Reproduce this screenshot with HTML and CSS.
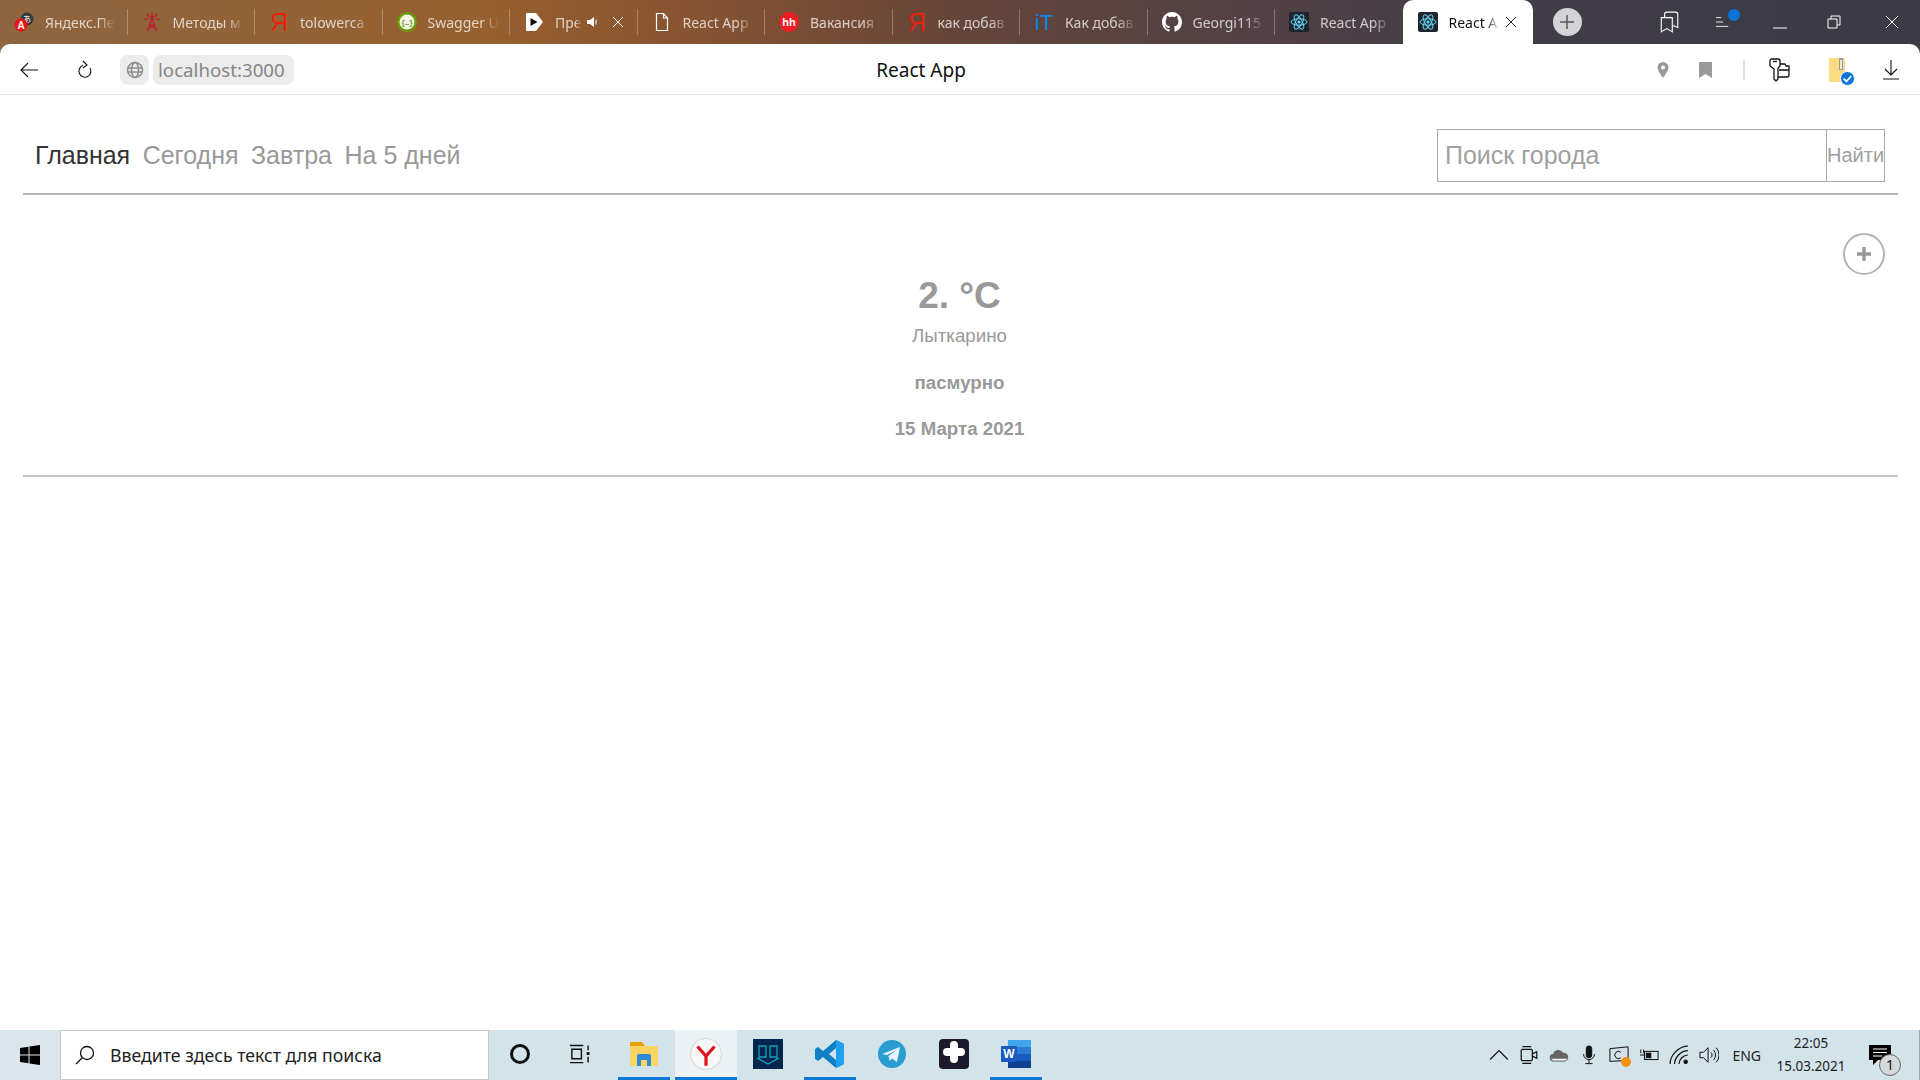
FILE: index.html
```html
<!DOCTYPE html>
<html lang="ru">
<head>
  <meta charset="UTF-8">
  <title>React App</title>
  <link rel="stylesheet" href="styles.css">
</head>
<body>

  <svg class="sprite" aria-hidden="true">
    <symbol id="ico-react" viewBox="0 0 20 20">
      <rect width="20" height="20" rx="2" fill="#20232a"/>
      <g fill="none" stroke="#61dafb" stroke-width="1">
        <ellipse cx="10" cy="10" rx="8" ry="3.2"/>
        <ellipse cx="10" cy="10" rx="8" ry="3.2" transform="rotate(60 10 10)"/>
        <ellipse cx="10" cy="10" rx="8" ry="3.2" transform="rotate(120 10 10)"/>
      </g>
      <circle cx="10" cy="10" r="1.6" fill="#61dafb"/>
    </symbol>
  </svg>

  <header class="browser">
    <div class="tabs">
      <div class="tab">
        <svg class="tab-ico" viewBox="0 0 20 20">
          <circle cx="13" cy="7" r="6.5" fill="#3a3a3a"/>
          <text x="13" y="10" text-anchor="middle" font-family="Noto Sans CJK JP" font-size="8" fill="#fff">あ</text>
          <circle cx="7" cy="13" r="6.5" fill="#f01018"/>
          <text x="7" y="17" text-anchor="middle" font-family="Liberation Sans" font-weight="700" font-size="10" fill="#fff">A</text>
        </svg>
        <span class="tab-title">Яндекс.Пе</span>
      </div>
      <div class="tab">
        <svg class="tab-ico" viewBox="0 0 20 20" fill="none" stroke="#b8242a" stroke-width="1.5">
          <path d="M10 6 5.5 19M10 6l4.500 13M7.500 13h5M6.500 16l7-3M13.500 16l-7-3"/>
          <path d="M10 1v2M4.500 2 7 5M15.500 2 13 5M2.500 7l3 .5M17.500 7l-3 .5"/>
          <circle cx="10" cy="5.500" r="1.500" fill="#b8242a"/>
        </svg>
        <span class="tab-title">Методы м</span>
      </div>
      <div class="tab">
        <svg class="tab-ico" viewBox="0 0 20 20"><text x="10" y="19" text-anchor="middle" font-family="Liberation Sans" font-size="25" fill="#e8220f">Я</text></svg>
        <span class="tab-title">tolowerca</span>
      </div>
      <div class="tab">
        <svg class="tab-ico" viewBox="0 0 20 20">
          <circle cx="10" cy="10" r="10" fill="#6b9a0a"/>
          <circle cx="10" cy="10" r="7.500" fill="#f1f4e2"/>
          <text x="10" y="12.500" text-anchor="middle" font-family="Liberation Mono" font-weight="700" font-size="6.500" fill="#5b8a08">{…}</text>
        </svg>
        <span class="tab-title">Swagger U</span>
      </div>
      <div class="tab">
        <svg class="tab-ico" viewBox="0 0 20 20">
          <path d="M3 1h9l7 9-7 9H3a1 1 0 0 1-1-1V2a1 1 0 0 1 1-1z" fill="#fff"/>
          <path d="M6.500 6v8l7-4z" fill="#111"/>
        </svg>
        <span class="tab-title tab-title-short">Пре</span>
        <svg class="tab-sound" viewBox="0 0 12 12"><path d="M1 4h3l4-3v10L4 8H1z" fill="#fff"/><path d="M10 3.500v5" stroke="#fff"/></svg>
        <svg class="tab-x tab-x-light" viewBox="0 0 12 12"><path d="M1 1l10 10M11 1 1 11"/></svg>
      </div>
      <div class="tab">
        <svg class="tab-ico" viewBox="0 0 20 20" fill="none" stroke="#fff" stroke-width="1.200"><path d="M4.500 1.500h7l4 4.500v12.500h-11z"/><path d="M11.500 1.500V6h4"/></svg>
        <span class="tab-title">React App</span>
      </div>
      <div class="tab">
        <svg class="tab-ico" viewBox="0 0 20 20">
          <circle cx="10" cy="10" r="10" fill="#ee1d24"/>
          <text x="10" y="14" text-anchor="middle" font-family="Liberation Sans" font-weight="700" font-size="11" fill="#fff">hh</text>
        </svg>
        <span class="tab-title">Вакансия</span>
      </div>
      <div class="tab">
        <svg class="tab-ico" viewBox="0 0 20 20"><text x="10" y="19" text-anchor="middle" font-family="Liberation Sans" font-size="25" fill="#e8220f">Я</text></svg>
        <span class="tab-title">как добав</span>
      </div>
      <div class="tab">
        <svg class="tab-ico" viewBox="0 0 20 20">
          <text x="10" y="18" text-anchor="middle" font-family="Liberation Sans" font-size="22" fill="#0a84e8">iT</text>
        </svg>
        <span class="tab-title">Как добав</span>
      </div>
      <div class="tab">
        <svg class="tab-ico" viewBox="0 0 16 16">
          <path fill="#fff" d="M8 0C3.580 0 0 3.580 0 8c0 3.540 2.290 6.530 5.470 7.590.4.070.55-.17.55-.38 0-.19-.01-.82-.01-1.490-2.010.37-2.530-.49-2.690-.94-.09-.23-.48-.94-.82-1.130-.28-.15-.68-.52-.01-.53.63-.01 1.080.58 1.230.82.72 1.210 1.870.87 2.330.66.070-.52.28-.87.51-1.070-1.780-.2-3.640-.89-3.640-3.950 0-.87.31-1.590.82-2.150-.08-.2-.36-1.020.08-2.120 0 0 .67-.21 2.200.82.64-.18 1.320-.27 2-.27.68 0 1.360.09 2 .27 1.530-1.040 2.200-.82 2.200-.82.44 1.100.16 1.920.08 2.120.51.56.82 1.270.82 2.150 0 3.070-1.870 3.750-3.650 3.950.29.25.54.73.54 1.480 0 1.070-.01 1.930-.01 2.200 0 .21.15.46.55.38A8.013 8.013 0 0 0 16 8c0-4.420-3.580-8-8-8z"/>
        </svg>
        <span class="tab-title">Georgi115</span>
      </div>
      <div class="tab tab-last">
        <svg class="tab-ico"><use href="#ico-react"/></svg>
        <span class="tab-title">React App</span>
      </div>
      <div class="tab tab-active">
        <svg class="tab-ico"><use href="#ico-react"/></svg>
        <span class="tab-title tab-title-active">React A</span>
        <svg class="tab-x" viewBox="0 0 12 12"><path d="M1 1l10 10M11 1 1 11"/></svg>
      </div>
      <div class="new-tab">
        <svg viewBox="0 0 14 14"><path d="M7 0v14M0 7h14"/></svg>
      </div>

      <div class="win-btns">
        <svg class="win-ico win-collect" viewBox="0 0 18 20"><path d="M2 6h10v13l-5-3-5 3zM5 6V3a2 2 0 0 1 2-2h8a2 2 0 0 1 2 2v12l-5-2"/></svg>
        <div class="win-menu">
          <svg class="win-ico" viewBox="0 0 16 14"><path d="M0 2h6M0 7h8M0 12h14"/></svg>
          <span class="win-dot"></span>
        </div>
        <svg class="win-ico win-min" viewBox="0 0 14 14"><path d="M0 13h14"/></svg>
        <svg class="win-ico win-restore" viewBox="0 0 14 14"><path d="M1 4h9v9H1zM4 4V1h9v9h-3"/></svg>
        <svg class="win-ico win-close" viewBox="0 0 14 14"><path d="M1 1l12 12M13 1 1 13"/></svg>
      </div>
    </div>

    <div class="toolbar">
      <svg class="tool-ico tool-back" viewBox="0 0 18 16"><path d="M18 8H1M8 1 1 8l7 7"/></svg>
      <svg class="tool-ico tool-reload" viewBox="0 0 16 20"><path d="M13 8a6 6 0 1 1-7-2.500M6 1l4 4-4 3"/></svg>
      <div class="globe-pill">
        <svg viewBox="0 0 18 18" fill="none" stroke="#8c8c8c" stroke-width="1.500"><circle cx="9" cy="9" r="7.500"/><ellipse cx="9" cy="9" rx="3.500" ry="7.500"/><path d="M2 7h14M2 11h14"/></svg>
      </div>
      <div class="url-pill">localhost:3000</div>
      <div class="page-title">React App</div>
      <div class="tool-right">
        <svg class="tr-pin" viewBox="0 0 12 16"><path fill="#999" fill-rule="evenodd" d="M6 0a5.500 5.500 0 0 1 5.500 5.500C11.500 9 6 16 6 16S.5 9 .5 5.500A5.500 5.500 0 0 1 6 0zm0 3.500a2 2 0 1 0 0 4 2 2 0 0 0 0-4z"/></svg>
        <svg class="tr-mark" viewBox="0 0 13 16"><path fill="#999" d="M0 0h13v16L6.500 12 0 16z"/></svg>
        <span class="tr-sep"></span>
        <svg class="tr-keys" viewBox="0 0 22 24" fill="none" stroke="#111" stroke-width="1.300"><path d="M3 1h7a2 2 0 0 1 2 2v5l-2 2v11l-2 2-2-2V11L2 8V3a2 2 0 0 1 1-2z"/><path d="M5 3.500h4"/><path d="M12 6h5l1 2h3v9a2 2 0 0 1-2 2h-9M11 12h10"/></svg>
        <div class="tr-zip">
          <svg viewBox="0 0 16 24"><rect width="16" height="24" fill="#f9dc82"/><rect x="10" width="4" height="12" fill="#9a9a9a"/><rect x="11" y="2" width="2" height="9" fill="#e8e8e8"/></svg>
          <span class="zip-badge">
            <svg viewBox="0 0 12 12"><path d="M2.500 6.200 5 8.700l4.500-5"/></svg>
          </span>
        </div>
        <svg class="tool-ico tr-down" viewBox="0 0 16 20"><path d="M8 0v15M2 9l6 6 6-6M0 19h16"/></svg>
      </div>
    </div>
  </header>

  <main class="page">
    <div class="top-nav">
      <nav class="nav-links">
        <a class="nav-link nav-link-active">Главная</a>
        <a class="nav-link">Сегодня</a>
        <a class="nav-link">Завтра</a>
        <a class="nav-link">На 5 дней</a>
      </nav>
      <form class="search">
        <input class="search-input" type="text" placeholder="Поиск города">
        <button class="search-btn" type="button">Найти</button>
      </form>
    </div>

    <section class="weather">
      <div class="add-row">
        <button class="add-btn" type="button">
          <svg viewBox="0 0 16 16"><path d="M8 1v14M1 8h14"/></svg>
        </button>
      </div>
      <h1 class="temp">2. °C</h1>
      <p class="city">Лыткарино</p>
      <p class="weather-line">пасмурно</p>
      <p class="weather-line">15 Марта 2021</p>
    </section>
  </main>

  <footer class="taskbar">
    <div class="start">
      <svg viewBox="0 0 20 20"><path fill="#000" d="M0 3l8.500-1.200V9.500H0zM9.500 1.600 20 0v9.500H9.500zM0 10.500h8.500v7.700L0 17zM9.500 10.500H20V20L9.500 18.400z"/></svg>
    </div>
    <div class="task-search">
      <svg viewBox="0 0 20 20" fill="none" stroke="#111" stroke-width="1.300"><circle cx="12" cy="8" r="6.500"/><path d="M7.500 12.500 1 19"/></svg>
      <span>Введите здесь текст для поиска</span>
    </div>
    <div class="slot">
      <span class="cortana"></span>
    </div>
    <div class="slot">
      <svg class="slot-ico-sm" viewBox="0 0 22 20" fill="none" stroke="#111" stroke-width="1.500"><path d="M1 1h14M1 19h14M3 5h10v10H3zM20 1v5M20 13v6"/><rect x="18.500" y="8" width="3" height="3" fill="#111" stroke="none"/></svg>
    </div>
    <div class="slot slot-open">
      <svg class="slot-ico" viewBox="0 0 30 30">
        <path d="M1 3h12l3 4H1z" fill="#e0a100"/>
        <rect x="1" y="7" width="28" height="20" fill="#fcd462"/>
        <path d="M8 27V17a2 2 0 0 1 2-2h10a2 2 0 0 1 2 2v10h-4v-6h-6v6z" fill="#2e8ad8"/>
      </svg>
    </div>
    <div class="slot slot-active">
      <svg class="slot-ico slot-ico-big" viewBox="0 0 30 30">
        <circle cx="15" cy="15" r="14.500" fill="#f7f7f7" stroke="#d8d8d8"/>
        <path d="M7 8l8 9 8-9M15 17v9" fill="none" stroke="#e2121c" stroke-width="3"/>
      </svg>
    </div>
    <div class="slot">
      <svg class="slot-ico" viewBox="0 0 30 30">
        <rect width="30" height="30" fill="#04254d"/>
        <path d="M6 7h7v11H6zM17 7h7v11h-7zM4 19l11 6 11-6M6 10v10l9 5 9-5V10" fill="none" stroke="#0fa4b8" stroke-width="1.300"/>
      </svg>
    </div>
    <div class="slot slot-open">
      <svg class="slot-ico" viewBox="0 0 30 30">
        <path d="M21 1l8 4v20l-8 4-13-11-5 4-3-2V10l3-2 5 4zM21 9l-7 6 7 6z" fill="#0f7fc4"/>
        <path d="M21 1l8 4v20l-8 4z" fill="#1fa0ee"/>
      </svg>
    </div>
    <div class="slot">
      <svg class="slot-ico" viewBox="0 0 30 30">
        <circle cx="15" cy="15" r="14" fill="#2a9dd0"/>
        <path d="M5 15 23 8l-3 15-5-3.500-2.500 2.500-1-5 8.500-6-10 5z" fill="#e6f3fa"/>
      </svg>
    </div>
    <div class="slot">
      <svg class="slot-ico" viewBox="0 0 30 30">
        <rect width="30" height="30" rx="4" fill="#1a1a2c"/>
        <path d="M11 6a4 4 0 0 1 8 0v3h3a4 4 0 0 1 0 8h-3v3a4 4 0 0 1-4 4 4 4 0 0 1-4-4v-3H8a4 4 0 0 1 0-8h3z" fill="#fff"/>
      </svg>
    </div>
    <div class="slot slot-open">
      <svg class="slot-ico" viewBox="0 0 30 30">
        <rect x="7" y="1" width="23" height="28" rx="1.500" fill="#2b7cd3"/>
        <rect x="7" y="1" width="23" height="7" fill="#41a5ee"/>
        <rect x="7" y="15" width="23" height="7" fill="#185abd"/>
        <rect x="7" y="22" width="23" height="7" fill="#103f91"/>
        <rect y="7" width="16" height="16" rx="1" fill="#185abd"/>
        <text x="8" y="19" text-anchor="middle" font-family="Liberation Sans" font-weight="700" font-size="12" fill="#fff">W</text>
      </svg>
    </div>

    <div class="tray">
      <svg class="tray-ico" viewBox="0 0 18 10"><path d="M1 9l8-8 8 8"/></svg>
      <svg class="tray-ico" viewBox="0 0 16 18"><rect x="1" y="4" width="10" height="10" rx="1"/><path d="M11 8l4-2v6l-4-2M2 1.500h8M2 16.500h8"/></svg>
      <svg class="tray-ico tray-fill" viewBox="0 0 22 14"><path fill="#666" stroke="none" d="M5 14a4 4 0 0 1-.5-8 6 6 0 0 1 11-1.500A4.800 4.800 0 0 1 17 14z"/><path fill="#eee" stroke="#555" stroke-width=".8" d="M1.800 10.500h19A4 4 0 0 1 17 13.600H5a4 4 0 0 1-3.200-3.100z"/></svg>
      <svg class="tray-ico" viewBox="0 0 14 22"><rect x="4" y="1" width="6" height="13" rx="3" fill="#111"/><path d="M1 10a6 6 0 0 0 12 0M7 16v4M3 20.500h8"/></svg>
      <div class="tray-mon">
        <svg class="tray-ico" viewBox="0 0 22 20"><path d="M1 3l20-2v15l-20 1zM13 7a4 4 0 1 0 0 6"/></svg>
        <span class="tray-dot"></span>
      </div>
      <svg class="tray-ico" viewBox="0 0 22 14"><rect x="6" y="3" width="15" height="9"/><rect x="8" y="5" width="5" height="5" fill="#111"/><path d="M1 7h5M2 1v4M5 1v4"/></svg>
      <svg class="tray-ico" viewBox="0 0 18 18"><path d="M1 17C1 9 9 1 17 1M5 17c0-6 6-12 12-12M9 17c0-4 4-8 8-8"/><circle cx="15" cy="15" r="1.500" fill="#111"/></svg>
      <svg class="tray-ico" viewBox="0 0 22 18"><path d="M1 6h4l5-5v16l-5-5H1zM13 6a4 4 0 0 1 0 6M16 3.500a8 8 0 0 1 0 11M19 1a12 12 0 0 1 0 16"/></svg>
      <span class="tray-lang">ENG</span>
      <div class="tray-clock">
        <span>22:05</span>
        <span>15.03.2021</span>
      </div>
      <div class="tray-notif">
        <svg viewBox="0 0 22 20"><path fill="#000" d="M0 0h22v15H9l-5 5v-5H0z"/><path stroke="#fff" d="M4 4h14M4 7.500h14M4 11h9"/></svg>
        <span class="notif-count">1</span>
      </div>
    </div>
  </footer>

</body>
</html>
```

FILE: styles.css
```css
* {
  box-sizing: border-box;
}

body {
  margin: 0;
  height: 100vh;
  overflow: hidden;
  display: flex;
  flex-direction: column;
  background: #fff;
  font-family: "Liberation Sans", Arial, sans-serif;
}

.sprite {
  position: absolute;
  width: 0;
  height: 0;
}

/* browser top */
.browser {
  background: linear-gradient(90deg, #8e6540 0%, #96602f 25%, #8a5431 35%, #654539 50%, #524145 65%, #403c48 80%, #3b3a45 100%);
}

.tabs {
  height: 44px;
  display: flex;
  align-items: center;
}

.tab {
  width: 127.5px;
  height: 26px;
  flex: none;
  display: flex;
  align-items: center;
  padding-left: 14px;
  border-right: 1px solid rgba(255, 255, 255, 0.28);
  font-family: "Noto Sans", sans-serif;
  font-size: 14px;
  color: rgba(255, 255, 255, 0.72);
}

.tab-last {
  border-right: none;
}

.tab-active {
  width: 130px;
  height: 44px;
  align-self: flex-end;
  padding-left: 15px;
  border-right: none;
  background: #fff;
  border-radius: 10px 10px 0 0;
  color: #111;
}

.tab-ico {
  width: 20px;
  height: 20px;
  flex: none;
  margin-right: 11px;
  overflow: visible;
}

.tab-title {
  width: 71px;
  flex: none;
  white-space: nowrap;
  overflow: hidden;
  -webkit-mask-image: linear-gradient(90deg, #000 75%, transparent 100%);
  mask-image: linear-gradient(90deg, #000 75%, transparent 100%);
}

.tab-title-short {
  width: 27px;
}

.tab-title-active {
  width: 50px;
}

.tab-sound {
  width: 12px;
  height: 12px;
  margin-left: 4px;
}

.tab-x {
  width: 12px;
  height: 12px;
  margin-left: 6px;
  stroke: #222;
  fill: none;
}

.tab-x-light {
  margin-left: 14px;
  stroke: #eee;
}

.new-tab {
  width: 29px;
  height: 28px;
  margin-left: 20px;
  border-radius: 50%;
  background: #d4d4d8;
  display: flex;
  align-items: center;
  justify-content: center;
}

.new-tab svg {
  width: 14px;
  height: 14px;
  stroke: #55555c;
  stroke-width: 1.5;
}

.win-btns {
  margin-left: auto;
  display: flex;
  align-items: center;
  padding-right: 21px;
}

.win-ico {
  width: 14px;
  height: 14px;
  fill: none;
  stroke: #fff;
  stroke-width: 1;
  display: block;
}

.win-collect {
  width: 20px;
  height: 22px;
}

.win-menu {
  position: relative;
  width: 17px;
  margin-left: 37px;
}

.win-min {
  margin-left: 40px;
}

.win-restore {
  margin-left: 40px;
}

.win-close {
  margin-left: 44px;
}

.win-dot {
  position: absolute;
  top: -6px;
  right: -7px;
  width: 12px;
  height: 12px;
  border-radius: 50%;
  background: #0a74da;
}

.toolbar {
  height: 51px;
  display: flex;
  align-items: center;
  position: relative;
  padding: 2px 0 0 20px;
  background: #fff;
  border-radius: 10px 10px 0 0;
  border-bottom: 1px solid #e6e6e6;
}

.tool-ico {
  fill: none;
  stroke: #111;
  stroke-width: 1.1;
  flex: none;
}

.tool-back {
  width: 18px;
  height: 16px;
}

.tool-reload {
  width: 16px;
  height: 20px;
  margin-left: 39px;
}

.globe-pill {
  width: 29px;
  height: 30px;
  margin-left: 27px;
  background: #ececec;
  border-radius: 8px;
  display: flex;
  align-items: center;
  justify-content: center;
}

.globe-pill svg {
  width: 18px;
  height: 18px;
}

.url-pill {
  height: 30px;
  margin-left: 4px;
  padding: 0 9px 0 5px;
  background: #ececec;
  border-radius: 8px;
  font-family: "Noto Sans", sans-serif;
  font-size: 18.7px;
  line-height: 29px;
  color: #858585;
}

.page-title {
  position: absolute;
  left: 875px;
  top: 1px;
  width: 92px;
  font-family: "Noto Sans", sans-serif;
  font-size: 19px;
  line-height: 50px;
  text-align: center;
  white-space: nowrap;
  color: #111;
}

.tool-right {
  margin-left: auto;
  display: flex;
  align-items: center;
  padding-right: 21px;
}

.tr-pin {
  width: 12px;
  height: 16px;
}

.tr-mark {
  width: 13px;
  height: 16px;
  margin-left: 30px;
}

.tr-sep {
  width: 2px;
  height: 20px;
  margin-left: 31px;
  background: #dedede;
}

.tr-keys {
  width: 22px;
  height: 24px;
  margin-left: 23px;
}

.tr-zip {
  position: relative;
  width: 16px;
  height: 24px;
  margin-left: 39px;
}

.tr-zip svg {
  display: block;
}

.zip-badge {
  position: absolute;
  left: 11px;
  top: 13px;
  width: 15px;
  height: 15px;
  border-radius: 50%;
  background: #0a74da;
  border: 1px solid #fff;
  display: flex;
}

.zip-badge svg {
  width: 13px;
  height: 13px;
  fill: none;
  stroke: #fff;
  stroke-width: 1.6;
}

.tr-down {
  width: 16px;
  height: 20px;
  margin-left: 38px;
}

/* weather page */
.page {
  flex: 1;
  padding: 0 22px 0 23px;
}

.top-nav {
  display: flex;
  align-items: center;
  justify-content: space-between;
  padding: 34px 13px 11px 12px;
  border-bottom: 2px solid #b4b4b4;
}

.nav-links {
  display: flex;
  gap: 12.500px;
}

.nav-link {
  font-size: 25px;
  color: #999;
}

.nav-link-active {
  color: #333;
}

.search {
  display: flex;
  margin: 0;
}

.search-input {
  width: 389px;
  height: 53px;
  padding: 0 7px;
  border: 1px solid #aaa;
  border-right: none;
  outline: none;
  font-family: "Liberation Sans", Arial, sans-serif;
  font-size: 25px;
}

.search-input::placeholder {
  color: #a0a0a0;
  opacity: 1;
}

.search-btn {
  width: 59px;
  height: 53px;
  padding: 0;
  border: 1px solid #aaa;
  background: #fff;
  font-family: "Liberation Sans", Arial, sans-serif;
  font-size: 20px;
  color: #a0a0a0;
}

.weather {
  padding: 38px 13px 36px 11px;
  border-bottom: 2px solid #c4c4c4;
  text-align: center;
  color: #999;
}

.add-row {
  display: flex;
  justify-content: flex-end;
}

.add-btn {
  width: 42px;
  height: 42px;
  padding: 0;
  border: 2px solid #b4b4b4;
  border-radius: 50%;
  background: #fff;
  display: flex;
  align-items: center;
  justify-content: center;
}

.add-btn svg {
  width: 16px;
  height: 16px;
  stroke: #999;
  stroke-width: 3.5;
}

.temp {
  margin: 0;
  font-size: 37px;
  line-height: 41px;
}

.city {
  margin: 9px 0 0;
  font-size: 18.7px;
  line-height: 21px;
}

.weather-line {
  margin: 26px 0 0;
  font-size: 18.7px;
  line-height: 21px;
  font-weight: 700;
}

.weather-line + .weather-line {
  margin-top: 25px;
}

/* windows taskbar */
.taskbar {
  height: 50px;
  flex: none;
  display: flex;
  align-items: stretch;
  background: linear-gradient(90deg, #dbe6ec 0%, #d3e3ea 25%, #d2e3ea 100%);
}

.start {
  width: 60px;
  display: flex;
  align-items: center;
  justify-content: center;
}

.start svg {
  width: 20px;
  height: 20px;
}

.task-search {
  width: 429px;
  display: flex;
  align-items: center;
  padding-left: 14px;
  background: #fff;
  border: 1px solid #c8c8c8;
  font-family: "Noto Sans", sans-serif;
  font-size: 17.7px;
  color: #222;
}

.task-search svg {
  width: 20px;
  height: 20px;
  margin-right: 15px;
}

.slot {
  width: 62px;
  display: flex;
  align-items: center;
  justify-content: center;
  padding-bottom: 3px;
}

.slot-open {
  background: linear-gradient(#0a78d4, #0a78d4) center bottom / 52px 3px no-repeat;
}

.slot-active {
  background: linear-gradient(#0a78d4, #0a78d4) center bottom / 100% 3px no-repeat, #ebf2f5;
}

.slot-ico {
  width: 30px;
  height: 30px;
}

.slot-ico-big {
  width: 32px;
  height: 32px;
}

.slot-ico-sm {
  width: 21px;
  height: 20px;
  margin-right: 6px;
}

.cortana {
  width: 20px;
  height: 20px;
  border: 3px solid #111;
  border-radius: 50%;
}

.tray {
  margin-left: auto;
  display: flex;
  align-items: center;
  gap: 10px;
  padding-right: 28px;
  border-right: 1px solid #9aa5aa;
  font-family: "Noto Sans", sans-serif;
  color: #222;
}

.tray-ico {
  width: 20px;
  height: 20px;
  fill: none;
  stroke: #111;
  stroke-width: 1.1;
  display: block;
}

.tray-mon {
  position: relative;
}

.tray-dot {
  position: absolute;
  right: -2px;
  bottom: -2px;
  width: 10px;
  height: 10px;
  border-radius: 50%;
  background: #f7930e;
}

.tray-lang {
  font-size: 14px;
  margin-left: 3px;
}

.tray-clock {
  width: 80px;
  margin-left: 0;
  display: flex;
  flex-direction: column;
  align-items: center;
  font-size: 13.500px;
  line-height: 23px;
}

.tray-notif {
  position: relative;
  width: 22px;
  height: 20px;
  margin-left: 8px;
}

.tray-notif svg {
  display: block;
}

.notif-count {
  position: absolute;
  left: 10px;
  top: 9px;
  width: 22px;
  height: 22px;
  border-radius: 50%;
  background: #d5d9da;
  border: 1px solid #666;
  font-size: 14px;
  line-height: 20px;
  text-align: center;
  color: #111;
}
```
